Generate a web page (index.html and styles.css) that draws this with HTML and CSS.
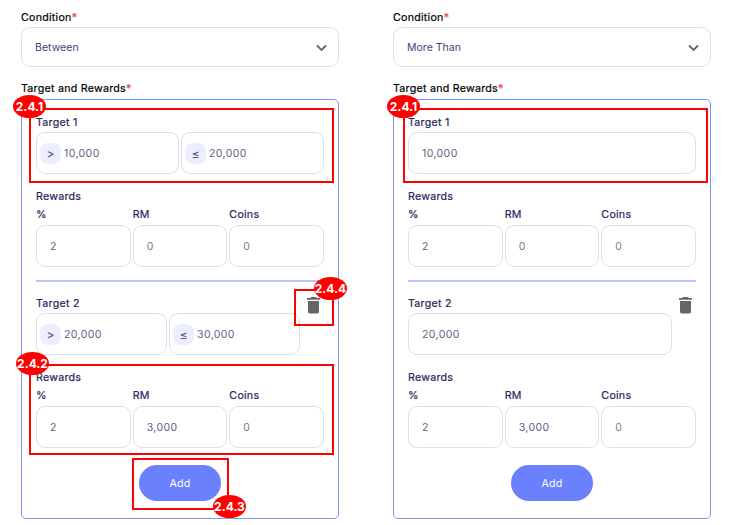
FILE: index.html
```html
<!DOCTYPE html>
<html lang="en">
<head>
<meta charset="utf-8">
<title>Target and Rewards</title>
<link rel="stylesheet" href="styles.css">
</head>
<body>
<main class="page">
  <section class="form">
    <div class="caption">Condition<span class="req">*</span></div>
    <div class="select">Between<svg class="chevron" viewBox="0 0 11 8"><path d="M1 1.500 5.500 6 10 1.500"/></svg></div>
    <div class="caption caption-panel">Target and Rewards<span class="req">*</span></div>
    <div class="panel">
      <div class="label">Target 1</div>
      <div class="row">
        <div class="field with-op"><span class="op">&gt;</span>10,000</div>
        <div class="field with-op"><span class="op">≤</span>20,000</div>
      </div>
      <div class="label rewards">Rewards</div>
      <div class="grid heads"><span>%</span><span>RM</span><span>Coins</span></div>
      <div class="grid">
        <div class="field">2</div><div class="field empty">0</div><div class="field empty">0</div>
      </div>
      <hr class="divider">
      <div class="target">
        <div class="target-main">
          <div class="label">Target 2</div>
          <div class="row">
            <div class="field with-op"><span class="op">&gt;</span>20,000</div>
            <div class="field with-op"><span class="op">≤</span>30,000</div>
          </div>
        </div>
        <svg class="trash" viewBox="0 0 13 17"><path d="M4.2 0h4.6l.8.9H13v1.8H0V.9h3.4zM1 4h11v10.8q0 1.700-1.700 1.700H2.700Q1 16.500 1 14.800z"/></svg>
      </div>
      <div class="label rewards">Rewards</div>
      <div class="grid heads"><span>%</span><span>RM</span><span>Coins</span></div>
      <div class="grid">
        <div class="field">2</div><div class="field">3,000</div><div class="field empty">0</div>
      </div>
      <button class="add">Add</button>
    </div>
    <div class="mark mark-target"><span class="tag tag-target">2.4.1</span></div>
    <div class="mark mark-delete"><span class="tag tag-delete">2.4.4</span></div>
    <div class="mark mark-rewards"><span class="tag tag-rewards">2.4.2</span></div>
    <div class="mark mark-add"><span class="tag tag-add">2.4.3</span></div>
  </section>

  <section class="form">
    <div class="caption">Condition<span class="req">*</span></div>
    <div class="select">More Than<svg class="chevron" viewBox="0 0 11 8"><path d="M1 1.500 5.500 6 10 1.500"/></svg></div>
    <div class="caption caption-panel">Target and Rewards<span class="req">*</span></div>
    <div class="panel">
      <div class="label">Target 1</div>
      <div class="row"><div class="field">10,000</div></div>
      <div class="label rewards">Rewards</div>
      <div class="grid heads"><span>%</span><span>RM</span><span>Coins</span></div>
      <div class="grid">
        <div class="field">2</div><div class="field empty">0</div><div class="field empty">0</div>
      </div>
      <hr class="divider">
      <div class="target">
        <div class="target-main">
          <div class="label">Target 2</div>
          <div class="row"><div class="field">20,000</div></div>
        </div>
        <svg class="trash" viewBox="0 0 13 17"><path d="M4.2 0h4.6l.8.9H13v1.8H0V.9h3.4zM1 4h11v10.8q0 1.700-1.700 1.700H2.700Q1 16.500 1 14.800z"/></svg>
      </div>
      <div class="label rewards">Rewards</div>
      <div class="grid heads"><span>%</span><span>RM</span><span>Coins</span></div>
      <div class="grid">
        <div class="field">2</div><div class="field">3,000</div><div class="field empty">0</div>
      </div>
      <button class="add">Add</button>
    </div>
    <div class="mark mark-target mark-single"><span class="tag tag-target">2.4.1</span></div>
  </section>
</main>
</body>
</html>
```
FILE: styles.css
```css
* { box-sizing: border-box; }

body {
  margin: 0;
  background: #fff;
  font: 400 10.7px/18px Inter, "Liberation Sans", sans-serif;
  letter-spacing: .24px;
  color: #2b2360;
}

.page {
  display: flex;
  gap: 54px;
  width: 732px;
  height: 525px;
  padding: 9px 21px 0;
  overflow: hidden;
}

.form { position: relative; width: 318px; flex: none; }

.caption { height: 16px; color: #000; }
.caption, .label, .heads { -webkit-text-stroke: .2px currentColor; }
.caption-panel { margin-top: 13px; }
.req { color: #f9453c; }

.select {
  display: flex;
  align-items: center;
  justify-content: space-between;
  height: 40px;
  margin-top: 2px;
  padding: 1px 11px 0 13px;
  border: 1px solid #dfddea;
  border-radius: 9px;
  font-size: 10.5px;
  letter-spacing: .03px;
  color: #463e78;
}
.chevron { width: 11px; height: 8px; fill: none; stroke: #666; stroke-width: 1.8; }

.panel {
  height: 420px;
  margin-top: 3px;
  padding: 14px 14px 0;
  border: 1px solid #8093f8;
  border-radius: 5px;
}

.label { height: 16px; line-height: 17px; }
.rewards { margin-top: 14px; line-height: 18px; }

.row { display: flex; gap: 2px; margin-top: 2px; }
.grid { display: grid; grid-template-columns: repeat(3, 1fr); gap: 2px; }
.heads { height: 16px; margin: 2px 0 3px; }

.field {
  display: flex;
  flex: 1;
  align-items: center;
  height: 42px;
  padding: 1px 0 0 13px;
  border: 1px solid #dfddea;
  border-radius: 9px;
  font-size: 10.5px;
  letter-spacing: .4px;
  color: #606083;
}
.empty { color: #7d7d7d; }
.with-op { padding-left: 3px; gap: 3px; }
.op {
  display: flex;
  align-items: center;
  justify-content: center;
  width: 21px;
  height: 21px;
  border-radius: 8px;
  background: #eceeff;
  font-size: 12px;
  font-weight: 500;
  letter-spacing: 0;
}

.divider { height: 2px; margin: 13px 0; border: 0; background: #b8c3fc; }

.target { display: flex; gap: 7px; }
.target-main { width: 264px; }
.trash { width: 13px; height: 17px; margin-top: 2px; fill: #666; }

.add {
  display: block;
  width: 82px;
  height: 36px;
  margin: 17px auto 0;
  padding: 1px 0 0;
  border: 0;
  border-radius: 18px;
  background: #6b80fd;
  color: #fff;
  font: inherit;
  letter-spacing: .2px;
}

/* Numbered callouts laid over the form */
.mark { position: absolute; border: 2px solid #f00; }
.mark-target { left: 8px; top: 99px; width: 305px; height: 75px; }
.mark-single { left: 10px; }
.mark-delete { left: 273px; top: 280px; width: 40px; height: 37px; }
.mark-rewards { left: 8px; top: 355px; width: 305px; height: 91px; }
.mark-add { left: 111px; top: 449px; width: 97px; height: 52px; }

.tag {
  position: absolute;
  width: 33px;
  height: 23px;
  border-radius: 50%;
  background: #f00;
  color: #fff;
  font-size: 12px;
  font-weight: 700;
  line-height: 24px;
  letter-spacing: 0;
  text-align: center;
}
.tag-target { left: -18px; top: -15px; }
.tag-delete { left: 18px; top: -14px; }
.tag-rewards { left: -15px; top: -14px; }
.tag-add { left: 79px; top: 35px; }
```
